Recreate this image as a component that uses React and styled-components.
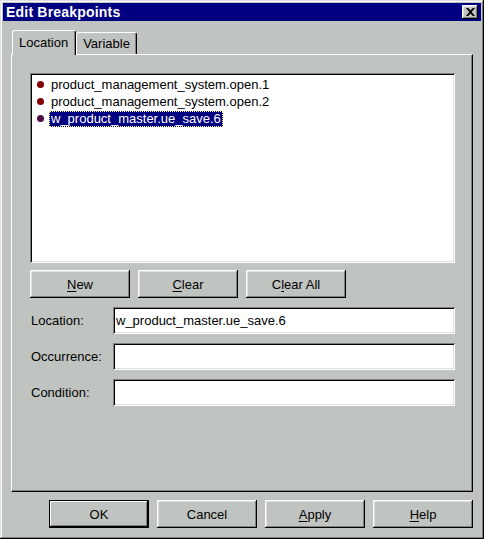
import React, { useState } from 'react';
import styled, { createGlobalStyle } from 'styled-components';

const GlobalStyle = createGlobalStyle`
  html, body {
    margin: 0;
    padding: 0;
    background: #c0c4c0;
  }
  * {
    box-sizing: border-box;
  }
`;

const FACE = '#c0c4c0';
const FONT = `"Liberation Sans", Arial, sans-serif`;

const breakpoints = [
  'product_management_system.open.1',
  'product_management_system.open.2',
  'w_product_master.ue_save.6',
];

const App = () => {
  const [tab, setTab] = useState('location');
  const [selected, setSelected] = useState(2);

  return (
    <>
      <GlobalStyle />
      <Window>
        <TitleBar>
          <Title>Edit Breakpoints</Title>
          <CloseButton aria-label="Close">
            <svg width="9" height="8" viewBox="0 0 9 8">
              <path d="M0 0h2.2l2.3 2.6L6.8 0H9L5.6 4 9 8H6.8L4.5 5.4 2.2 8H0l3.4-4z" fill="#000" />
            </svg>
          </CloseButton>
        </TitleBar>

        <Body>
          <TabRow>
            <Tab $active={tab === 'location'} onClick={() => setTab('location')}>Location</Tab>
            <Tab $active={tab === 'variable'} onClick={() => setTab('variable')}>Variable</Tab>
          </TabRow>

          <Panel>
            <ListBox>
              {breakpoints.map((bp, i) => (
                <ListItem key={bp} onClick={() => setSelected(i)}>
                  <Bullet $selected={i === selected} />
                  <ItemText $selected={i === selected}>{bp}</ItemText>
                </ListItem>
              ))}
            </ListBox>

            <ButtonRow>
              <Button><u>N</u>ew</Button>
              <Button><u>C</u>lear</Button>
              <Button>C<u>l</u>ear All</Button>
            </ButtonRow>

            <Fields>
              <FieldRow>
                <FieldLabel>Location:</FieldLabel>
                <TextBox defaultValue={breakpoints[selected]} />
              </FieldRow>
              <FieldRow>
                <FieldLabel>Occurrence:</FieldLabel>
                <TextBox defaultValue="" />
              </FieldRow>
              <FieldRow>
                <FieldLabel>Condition:</FieldLabel>
                <TextBox defaultValue="" />
              </FieldRow>
            </Fields>
          </Panel>

          <DialogButtons>
            <Button $default>OK</Button>
            <Button>Cancel</Button>
            <Button><u>A</u>pply</Button>
            <Button><u>H</u>elp</Button>
          </DialogButtons>
        </Body>
      </Window>
    </>
  );
};

const Window = styled.div`
  width: 484px;
  height: 539px;
  padding: 3px;
  background: ${FACE};
  font-family: ${FONT};
  font-size: 13px;
  color: #000;
  box-shadow:
    inset -1px -1px #000,
    inset 1px 1px #dfdfdf,
    inset -2px -2px #808080,
    inset 2px 2px #fff;
  display: flex;
  flex-direction: column;
`;

const TitleBar = styled.div`
  height: 18px;
  background: #000080;
  display: flex;
  align-items: center;
  justify-content: space-between;
  padding: 0 3px 0 3px;
`;

const Title = styled.span`
  color: #fff;
  font-weight: bold;
  font-size: 14px;
  letter-spacing: 0.2px;
`;

const CloseButton = styled.button`
  width: 16px;
  height: 14px;
  padding: 0;
  border: none;
  background: ${FACE};
  display: flex;
  align-items: center;
  justify-content: center;
  box-shadow:
    inset -1px -1px #000,
    inset 1px 1px #fff,
    inset -2px -2px #808080,
    inset 2px 2px #dfdfdf;
`;

const Body = styled.div`
  flex: 1;
  padding: 9px 8px 8px 8px;
  display: flex;
  flex-direction: column;
`;

const TabRow = styled.div`
  height: 24px;
  display: flex;
  align-items: flex-end;
  padding-left: 1px;
`;

const Tab = styled.div`
  position: relative;
  z-index: ${p => (p.$active ? 2 : 1)};
  height: ${p => (p.$active ? '25px' : '22px')};
  margin-bottom: ${p => (p.$active ? '-1px' : '0')};
  padding: ${p => (p.$active ? '4px 7px 0 6px' : '3px 6px 0 6px')};
  font-size: 13px;
  background: ${FACE};
  border-top: 1px solid #fff;
  border-left: 1px solid #fff;
  border-right: 1px solid #000;
  border-radius: 3px 3px 0 0;
  box-shadow: inset -1px 0 #808080;
  cursor: default;
`;

const Panel = styled.div`
  height: 438px;
  padding: 18px 17px 0 18px;
  border: 1px solid;
  border-color: #fff #000 #000 #fff;
  box-shadow: inset -1px -1px #808080;
  display: flex;
  flex-direction: column;
`;

const sunken = `
  background: #fff;
  box-shadow:
    inset 1px 1px #808080,
    inset -1px -1px #fff,
    inset 2px 2px #000,
    inset -2px -2px #dfdfdf;
`;

const ListBox = styled.div`
  height: 190px;
  padding: 3px 2px 2px 2px;
  ${sunken}
`;

const ListItem = styled.div`
  height: 17px;
  display: flex;
  align-items: center;
  padding-left: 5px;
  cursor: default;
`;

const Bullet = styled.span`
  width: 7px;
  height: 7px;
  border-radius: 50%;
  background: ${p => (p.$selected ? '#500848' : '#800000')};
  margin-right: 5px;
  flex: none;
`;

const ItemText = styled.span`
  line-height: 16px;
  padding: 0 2px;
  white-space: nowrap;
  background: ${p => (p.$selected ? '#000080' : 'transparent')};
  color: ${p => (p.$selected ? '#fff' : '#000')};
  outline: ${p => (p.$selected ? '1px dotted #ffff80' : 'none')};
  outline-offset: -1px;
`;

const ButtonRow = styled.div`
  display: flex;
  gap: 8px;
  margin-top: 7px;
`;

const Button = styled.button`
  width: 100px;
  height: 28px;
  padding: 0;
  border: none;
  background: ${FACE};
  font-family: ${FONT};
  font-size: 13px;
  color: #000;
  box-shadow: ${p =>
    p.$default
      ? `inset 0 0 0 1px #000, inset -2px -2px #000, inset 2px 2px #fff, inset -3px -3px #808080`
      : `inset -1px -1px #000, inset 1px 1px #fff, inset -2px -2px #808080, inset 2px 2px #dfdfdf`};

  u {
    text-decoration: underline;
    text-underline-offset: 2px;
  }
`;

const Fields = styled.div`
  display: flex;
  flex-direction: column;
  gap: 9px;
  margin-top: 9px;
`;

const FieldRow = styled.div`
  display: flex;
  align-items: center;
`;

const FieldLabel = styled.label`
  width: 83px;
  padding-left: 1px;
  flex: none;
`;

const TextBox = styled.input`
  width: 342px;
  height: 27px;
  border: none;
  padding: 0 3px;
  font-family: ${FONT};
  font-size: 13px;
  color: #000;
  outline: none;
  ${sunken}
`;

const DialogButtons = styled.div`
  display: flex;
  justify-content: flex-end;
  gap: 8px;
  margin-top: 8px;
`;

export default App;
